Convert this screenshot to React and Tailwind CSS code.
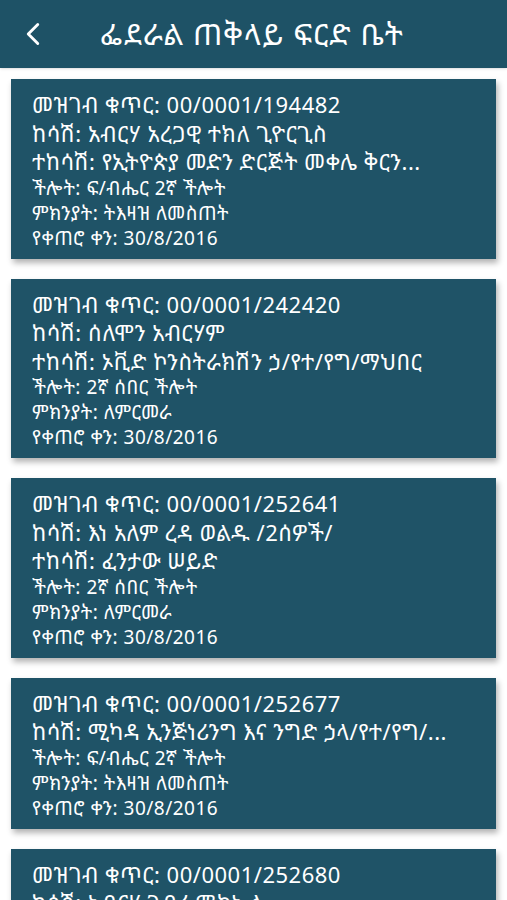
import React from 'react';
import { ChevronLeft } from 'lucide-react';

const cases = [
  {
    id: '00/0001/194482',
    plaintiff: 'አብርሃ አረጋዊ ተክለ ጊዮርጊስ',
    defendant: 'የኢትዮጵያ መድን ድርጅት መቀሌ ቅርን...',
    bench: 'ፍ/ብሔር 2ኛ ችሎት',
    reason: 'ትእዛዝ ለመስጠት',
    date: '30/8/2016',
  },
  {
    id: '00/0001/242420',
    plaintiff: 'ሰለሞን አብርሃም',
    defendant: 'ኦቪድ ኮንስትራክሽን ኃ/የተ/የግ/ማህበር',
    bench: '2ኛ ሰበር ችሎት',
    reason: 'ለምርመራ',
    date: '30/8/2016',
  },
  {
    id: '00/0001/252641',
    plaintiff: 'እነ አለም ረዳ ወልዱ /2ሰዎች/',
    defendant: 'ፈንታው ሠይድ',
    bench: '2ኛ ሰበር ችሎት',
    reason: 'ለምርመራ',
    date: '30/8/2016',
  },
  {
    id: '00/0001/252677',
    plaintiff: 'ሚካዳ ኢንጅነሪንግ እና ንግድ ኃላ/የተ/የግ/...',
    defendant: null,
    bench: 'ፍ/ብሔር 2ኛ ችሎት',
    reason: 'ትእዛዝ ለመስጠት',
    date: '30/8/2016',
  },
  {
    id: '00/0001/252680',
    plaintiff: 'አብርሃ ገብረ ሚካኤል',
    defendant: 'ሀይሉ ገብረ መድህን',
    bench: '2ኛ ሰበር ችሎት',
    reason: 'ለምርመራ',
    date: '30/8/2016',
  },
];

const font = { fontFamily: '"Noto Sans Ethiopic", "Abyssinica SIL", "Noto Sans", "DejaVu Sans", sans-serif' };

export default function App() {
  return (
    <div className="h-[900px] overflow-hidden bg-white text-white" style={font}>
      {/* Header */}
      <div className="h-[68px] bg-[#1e5266] flex items-center pl-[14px] shadow-sm">
        <ChevronLeft size={38} strokeWidth={1.8} className="text-white shrink-0" />
        <h1 className="ml-[48px] text-[30px] tracking-[1px] leading-none whitespace-nowrap">ፌደራል ጠቅላይ ፍርድ ቤት</h1>
      </div>

      <div className="flex flex-col gap-[20px] pt-[11px] px-[11px]">
        {cases.map(c => (
          <div key={c.id} className="bg-[#1f5367] shadow-[2px_4px_6px_rgba(0,0,0,0.3)] pt-[11px] pb-[8px] pl-[21px] pr-[24px]">
            <div className="text-[22px] tracking-[0.5px] leading-[28.5px] truncate">መዝገብ ቁጥር: {c.id}</div>
            <div className="text-[22px] tracking-[0.5px] leading-[28.5px] truncate">ከሳሽ: {c.plaintiff}</div>
            {c.defendant && <div className="text-[22px] tracking-[0.5px] leading-[28.5px] truncate">ተከሳሽ: {c.defendant}</div>}
            <div className="text-[19px] tracking-[0.5px] leading-[25px] truncate">ችሎት: {c.bench}</div>
            <div className="text-[19px] tracking-[0.5px] leading-[25px] truncate">ምክንያት: {c.reason}</div>
            <div className="text-[19px] tracking-[0.5px] leading-[25px] truncate">የቀጠሮ ቀን: {c.date}</div>
          </div>
        ))}
      </div>
    </div>
  );
}
